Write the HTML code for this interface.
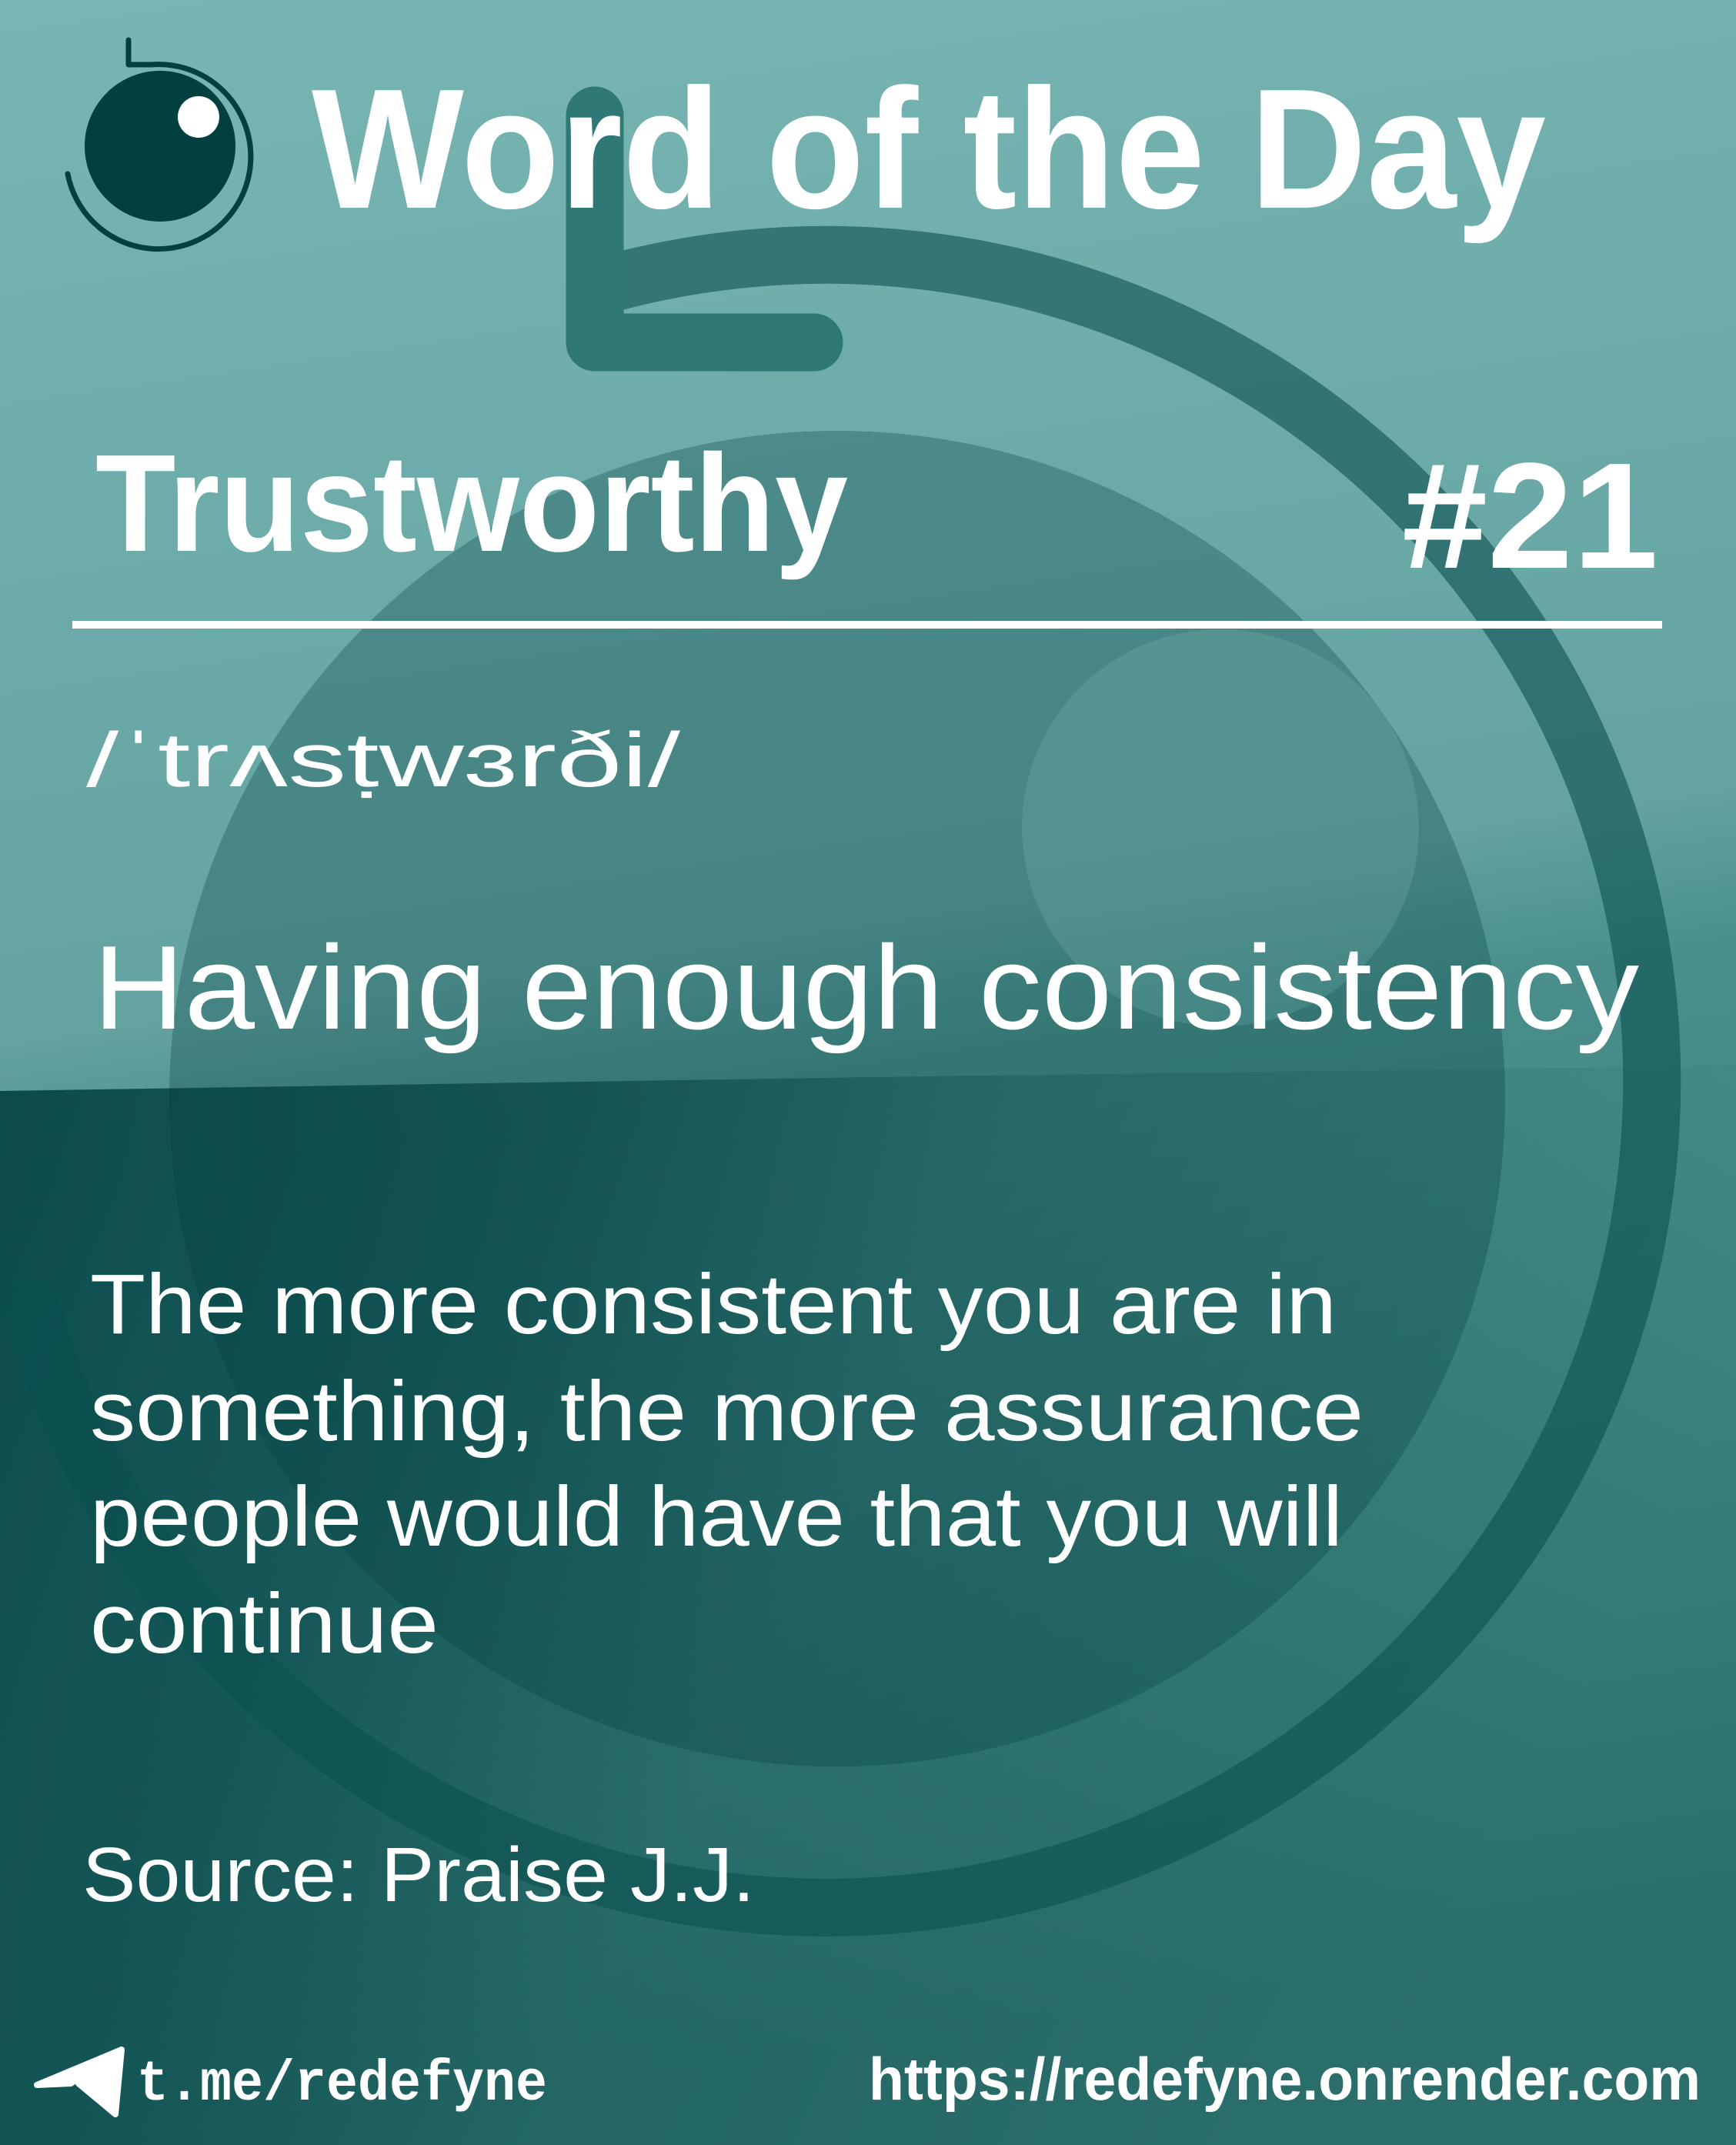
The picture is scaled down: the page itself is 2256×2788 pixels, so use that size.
<!DOCTYPE html>
<html><head><meta charset="utf-8"><style>
html,body{margin:0;padding:0;width:2256px;height:2788px;overflow:hidden;background:#2a6f6d}
svg{display:block}
</style></head><body>
<svg width="2256" height="2788" viewBox="0 0 2256 2788" xmlns="http://www.w3.org/2000/svg">
<defs>
<linearGradient id="base" x1="0" y1="0" x2="0.12" y2="1">
<stop offset="0" stop-color="#78b6b4"/><stop offset="0.48" stop-color="#63a3a0"/><stop offset="0.55" stop-color="#4a8f8c"/><stop offset="1" stop-color="#2b6f6c"/>
</linearGradient>
<linearGradient id="bot" x1="0" y1="0" x2="1" y2="0.3">
<stop offset="0" stop-color="#0a4a4b" stop-opacity="1"/><stop offset="0.3" stop-color="#0a4a4b" stop-opacity="0.75"/><stop offset="0.55" stop-color="#0a4a4b" stop-opacity="0.25"/><stop offset="1" stop-color="#0a4a4b" stop-opacity="0"/>
</linearGradient>
</defs>
<rect width="2256" height="2788" fill="url(#base)"/>
<polygon points="0,1418 1133,1400 2256,1385 2256,2788 0,2788" fill="url(#bot)"/>
<circle cx="1088" cy="1428" r="868" fill="rgba(0,62,62,0.3)"/>
<circle cx="1586" cy="1076" r="258" fill="rgba(140,200,195,0.2)"/>
<path d="M 780 372 A 1074 1074 0 1 1 40 1700" fill="none" stroke="rgba(12,80,80,0.6)" stroke-width="75" stroke-linecap="round"/>
<path d="M 773 150 L 773 445 L 1058 445" fill="none" stroke="rgb(47,120,118)" stroke-width="75" stroke-linecap="round" stroke-linejoin="round"/>
<!-- logo -->
<circle cx="208" cy="190" r="98" fill="#023f41"/>
<circle cx="258" cy="152" r="27" fill="#fff"/>
<path d="M 196 84 A 120 120 0 1 1 88 226" fill="none" stroke="#023f41" stroke-width="7" stroke-linecap="round"/>
<path d="M 167 52 L 167 84 L 198 84" fill="none" stroke="#023f41" stroke-width="7" stroke-linecap="round" stroke-linejoin="round"/>
<g fill="#fff" font-family="Liberation Sans, sans-serif">
<text x="405" y="270" font-size="222" font-weight="bold" textLength="1604" lengthAdjust="spacingAndGlyphs">Word of the Day</text>
<text x="124" y="716" font-size="180" font-weight="bold" textLength="978" lengthAdjust="spacingAndGlyphs">Trustworthy</text>
<text x="1822" y="738" font-size="196" font-weight="bold" textLength="333" lengthAdjust="spacingAndGlyphs">#21</text>
<text x="112" y="1022" font-size="100" textLength="772" lengthAdjust="spacingAndGlyphs">/ˈtrʌsṭwɜrði/</text>
<text x="121" y="1337" font-size="155" textLength="2009" lengthAdjust="spacingAndGlyphs">Having enough consistency</text>
<text x="117" y="1733" font-size="110" textLength="1620" lengthAdjust="spacingAndGlyphs">The more consistent you are in</text>
<text x="117" y="1872" font-size="110" textLength="1655" lengthAdjust="spacingAndGlyphs">something, the more assurance</text>
<text x="117" y="2009" font-size="110" textLength="1628" lengthAdjust="spacingAndGlyphs">people would have that you will</text>
<text x="117" y="2148" font-size="110" textLength="453" lengthAdjust="spacingAndGlyphs">continue</text>
<text x="107" y="2471" font-size="100" textLength="874" lengthAdjust="spacingAndGlyphs">Source: Praise J.J.</text>
<text x="178" y="2729" font-size="74" font-weight="bold" font-family="Liberation Mono, monospace" textLength="533" lengthAdjust="spacingAndGlyphs">t.me/redefyne</text>
<text x="1129" y="2729" font-size="78" font-weight="bold" textLength="1081" lengthAdjust="spacingAndGlyphs">https://redefyne.onrender.com</text>
</g>
<rect x="94" y="807" width="2066" height="10" fill="#fff"/>
<path d="M 158 2664 L 150 2748 L 102 2708 L 128 2682 L 92 2708 L 48 2710 Z" fill="#fff" stroke="#fff" stroke-width="8" stroke-linejoin="round"/>
</svg>
</body></html>
